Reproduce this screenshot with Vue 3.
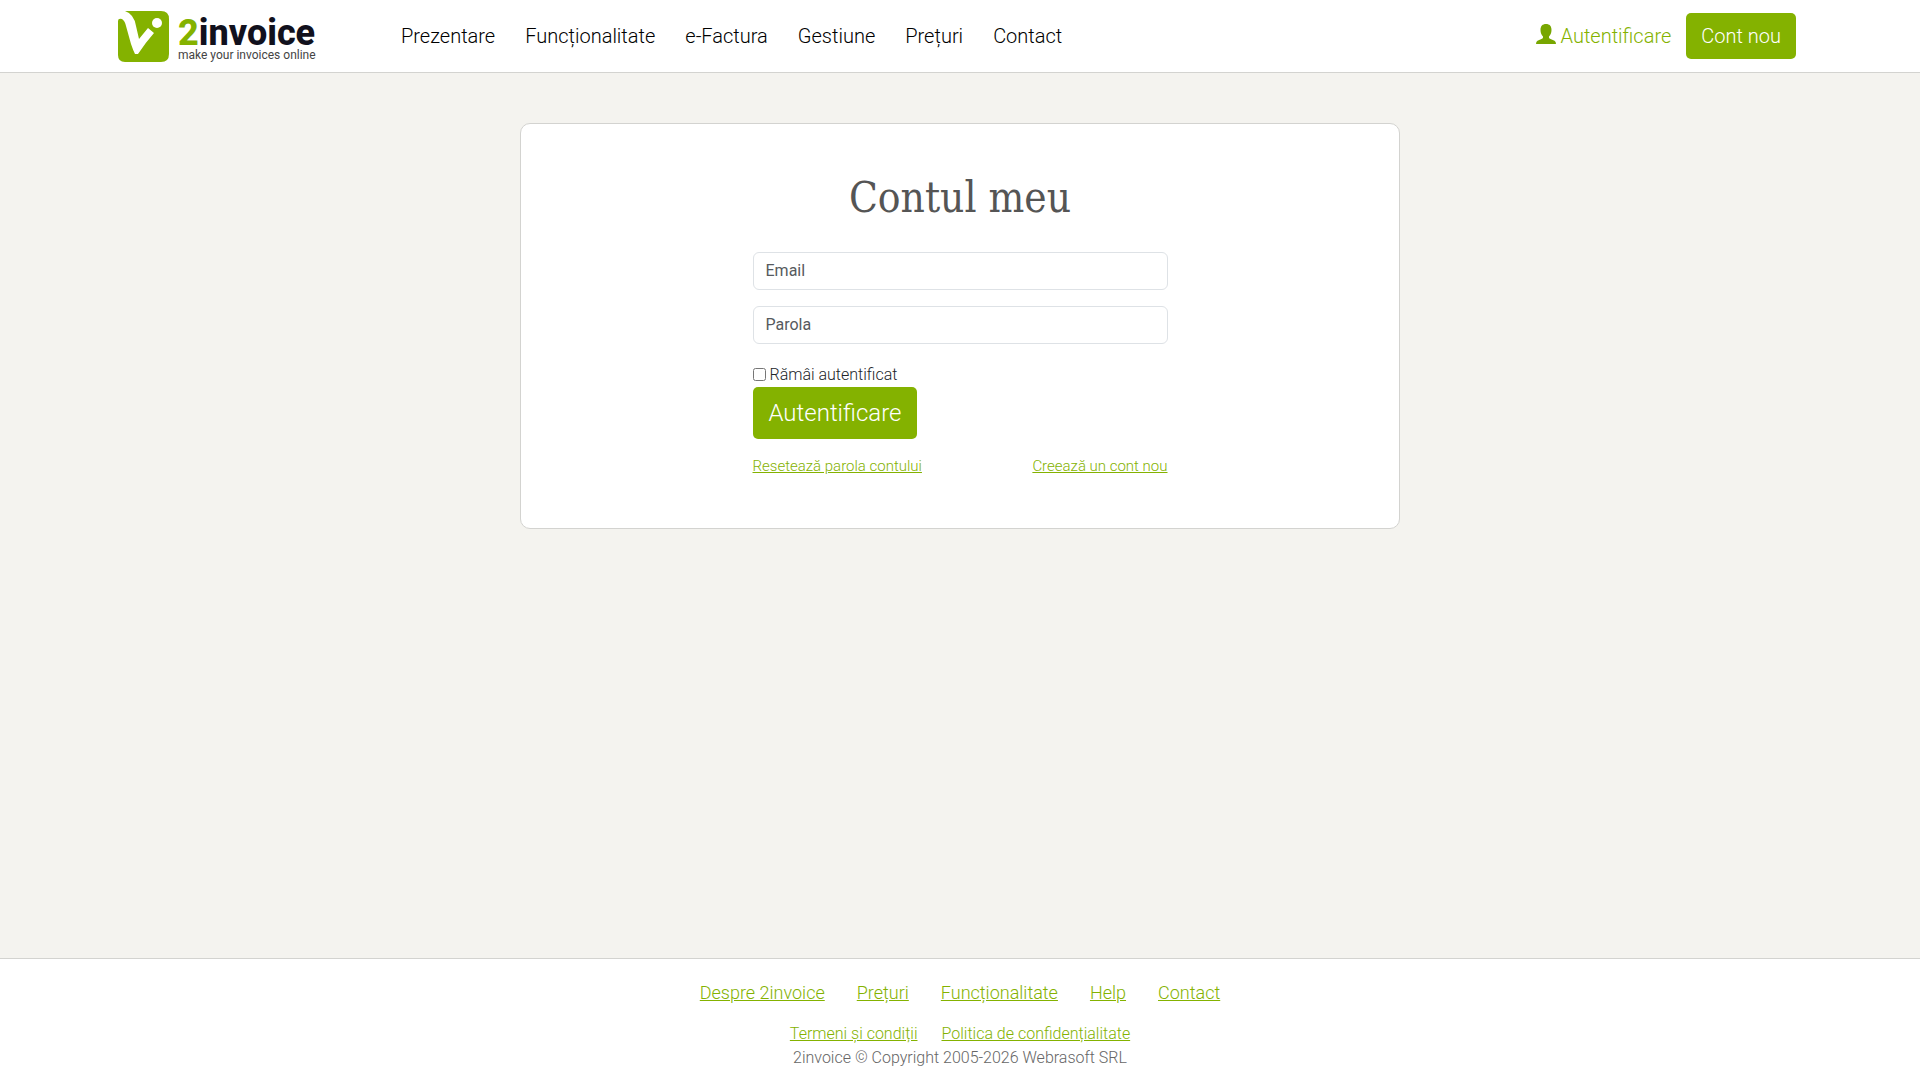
<script setup>
import { ref } from 'vue'

const navLinks = ['Prezentare', 'Funcționalitate', 'e-Factura', 'Gestiune', 'Prețuri', 'Contact']
const footerLinks = ['Despre 2invoice', 'Prețuri', 'Funcționalitate', 'Help', 'Contact']
const legalLinks = ['Termeni și condiții', 'Politica de confidențialitate']

const email = ref('')
const password = ref('')
const remember = ref(false)
</script>

<template>
  <div class="page">
    <header class="header">
      <div class="header-inner">
        <a class="logo" href="#">
          <svg class="logo-mark" viewBox="0 0 51 51" aria-hidden="true">
            <path fill="#84b200" d="M7 0H43Q51 0 51 8V43Q51 51 43 51H7Q0 51 0 44V10Q0 7 4 8Q7 10 8 15L13 33Q15 39 17 43H20Q28 31 36 22L30 17L21 28L18 15Q16 3 7 0Z" />
            <circle cx="39" cy="12" r="5" fill="#fff" />
          </svg>
          <span class="logo-words">
            <span class="logo-name"><span class="logo-two">2</span>invoice</span>
            <span class="logo-tagline">make your invoices online</span>
          </span>
        </a>
        <nav class="nav">
          <a v-for="item in navLinks" :key="item" href="#">{{ item }}</a>
        </nav>
        <div class="actions">
          <a class="login-link" href="#">
            <svg class="user-icon" viewBox="0 0 20 20" aria-hidden="true">
              <path fill="#77a600" d="M10 0C13.500 0 15.500 2 15.500 6C15.500 9 14.500 11 13 12.500V13.500Q13 14.300 14 14.800L18.500 16.800Q20 17.500 20 20H0Q0 17.500 1.500 16.800L6 14.800Q7 14.300 7 13.500V12.500C5.500 11 4.500 9 4.500 6C4.500 2 6.500 0 10 0Z" />
            </svg>
            Autentificare
          </a>
          <a class="btn" href="#">Cont nou</a>
        </div>
      </div>
    </header>

    <main class="main">
      <section class="card">
        <h1>Contul meu</h1>
        <form class="form" @submit.prevent>
          <input v-model="email" class="field" type="email" placeholder="Email" aria-label="Email" />
          <input v-model="password" class="field" type="password" placeholder="Parola" aria-label="Parola" />
          <div class="remember">
            <input id="remember" v-model="remember" type="checkbox" />
            <label for="remember">Rămâi autentificat</label>
          </div>
          <button class="btn btn-large" type="submit">Autentificare</button>
          <div class="form-links">
            <a href="#">Resetează parola contului</a>
            <a href="#">Creează un cont nou</a>
          </div>
        </form>
      </section>
    </main>

    <footer class="footer">
      <nav class="footer-links">
        <a v-for="item in footerLinks" :key="item" href="#">{{ item }}</a>
      </nav>
      <nav class="legal-links">
        <a v-for="item in legalLinks" :key="item" href="#">{{ item }}</a>
      </nav>
      <p>2invoice © Copyright 2005-2026 Webrasoft SRL</p>
    </footer>
  </div>
</template>

<style>
body {
  margin: 0;
  background: #f4f3ef;
}
</style>

<style scoped>
.page,
.page * {
  box-sizing: border-box;
}
.page {
  display: flex;
  flex-direction: column;
  min-height: 100vh;
  font-family: Roboto, sans-serif;
  font-size: 16px;
  font-weight: 300;
  line-height: 24px;
  color: #212529;
}
a {
  color: #84b200;
}
.header {
  background: #fff;
  border-bottom: 1px solid #d3d3d0;
}
.header-inner {
  display: flex;
  align-items: center;
  max-width: 1684px;
  min-height: 72px;
  margin: 0 auto;
  padding-right: 6px;
  font-size: 20px;
  line-height: 30px;
}
.header a {
  text-decoration: none;
}
.logo {
  display: flex;
  gap: 9px;
  width: 268px;
}
.logo-mark {
  width: 51px;
  height: 51px;
}
.logo-words {
  display: flex;
  flex-direction: column;
  padding-top: 6px;
  white-space: nowrap;
}
.logo-name {
  font-size: 36px;
  font-weight: 800;
  line-height: 32px;
  color: #11111d;
}
.logo-two {
  color: #84b200;
}
.logo-tagline {
  font-size: 12px;
  font-weight: 400;
  line-height: 12px;
  color: #444;
}
.nav {
  display: flex;
}
.nav a {
  padding: 0 15px;
  color: #000;
}
.actions {
  display: flex;
  align-items: center;
  gap: 15px;
  margin-left: auto;
}
.login-link {
  display: flex;
  align-items: center;
  gap: 5px;
}
.user-icon {
  width: 20px;
  height: 20px;
  margin-bottom: 4px;
}
.btn {
  padding: 8px 15px;
  border: 0;
  border-radius: 5px;
  background: #84b200;
  color: #fff;
  font-family: inherit;
  font-weight: 300;
}
.main {
  flex: 1;
  padding: 50px 16px;
}
.card {
  max-width: 880px;
  margin: 0 auto;
  padding: 50px;
  border: 1px solid #d3d3d0;
  border-radius: 10px;
  background: #fff;
}
h1 {
  margin: 0 0 30px;
  font-family: "Roboto Slab", "DejaVu Serif Condensed", "DejaVu Serif", serif;
  font-size: 42px;
  font-weight: 400;
  line-height: 48px;
  text-align: center;
  color: #555;
}
.form {
  display: flex;
  flex-direction: column;
  align-items: flex-start;
  max-width: 415px;
  margin: 0 auto;
}
.field {
  width: 100%;
  height: 38px;
  margin: 0 0 16px;
  padding: 0 12px 2px;
  border: 1px solid #dee2e6;
  border-radius: 6px;
  background: #fff;
  color: #212529;
  font-family: inherit;
  font-size: 16px;
  font-weight: 400;
}
.field::placeholder {
  color: #565a5e;
  opacity: 1;
}
.remember {
  display: flex;
  align-items: center;
  gap: 4px;
  padding-top: 3px;
}
.remember input {
  width: 13px;
  height: 13px;
  margin: 0 0 2px;
}
.btn-large {
  padding: 8px 16px;
  font-size: 24px;
  line-height: 36px;
}
.form-links {
  display: flex;
  justify-content: space-between;
  width: 100%;
  margin-top: 16px;
  font-size: 15px;
  line-height: 23px;
}
.footer {
  padding: 20px 16px 10px;
  border-top: 1px solid #d3d3d0;
  background: #fff;
  text-align: center;
  color: #666;
}
.footer-links,
.legal-links {
  display: flex;
  justify-content: center;
}
.footer-links {
  gap: 32px;
  margin-bottom: 16px;
  font-size: 18px;
  line-height: 27px;
}
.legal-links {
  gap: 24px;
}
p {
  margin: 0;
}
</style>
